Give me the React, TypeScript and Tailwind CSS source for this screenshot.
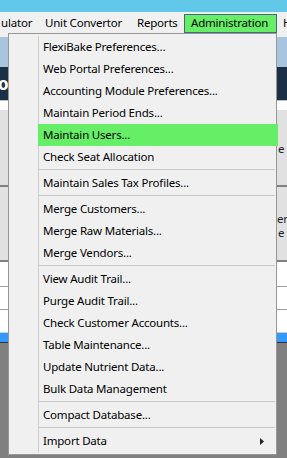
import React from "react";

type Entry = { label: string; active?: boolean; sub?: boolean } | "sep";

const entries: Entry[] = [
  { label: "FlexiBake Preferences..." },
  { label: "Web Portal Preferences..." },
  { label: "Accounting Module Preferences..." },
  { label: "Maintain Period Ends..." },
  { label: "Maintain Users...", active: true },
  { label: "Check Seat Allocation" },
  "sep",
  { label: "Maintain Sales Tax Profiles..." },
  "sep",
  { label: "Merge Customers..." },
  { label: "Merge Raw Materials..." },
  { label: "Merge Vendors..." },
  "sep",
  { label: "View Audit Trail..." },
  { label: "Purge Audit Trail..." },
  { label: "Check Customer Accounts..." },
  { label: "Table Maintenance..." },
  { label: "Update Nutrient Data..." },
  { label: "Bulk Data Management" },
  "sep",
  { label: "Compact Database..." },
  "sep",
  { label: "Import Data", sub: true },
];

const App: React.FC = () => {
  return (
    <div className="relative w-[287px] h-[458px] overflow-hidden bg-[#808080] font-['Noto_Sans',sans-serif] text-[11.5px] tracking-[-0.2px] text-black">
      {/* window background */}
      <div className="flex flex-col">
        <div className="h-[12px] bg-[#62c8ea]" />

        {/* menu bar */}
        <div className="h-[21px] bg-[#f0f0f0] flex items-center whitespace-nowrap">
          <div className="w-[38px] shrink-0 pl-[1px] overflow-hidden">ulator</div>
          <div className="w-[92px] shrink-0 pl-[7px]">Unit Convertor</div>
          <div className="w-[54px] shrink-0 pl-[7px]">Reports</div>
          <div className="w-[93px] shrink-0 h-[19px] mt-[1px] flex items-center pl-[6px] bg-[#66ee66] border border-[#44687c]">
            Administration
          </div>
          <div className="shrink-0 pl-[6px]">H</div>
        </div>

        <div className="h-[4px] bg-[#f0f0f0]" />
        <div className="h-[30px] bg-[#a9c4df]" />
        <div className="h-[33px] bg-[#1b2f47] flex items-center">
          <span className="-ml-[2px] text-white font-bold text-[17px]">o</span>
        </div>
        <div className="h-[10px] bg-white border-t border-[#c0c0c0]" />
        <div className="h-[75px] bg-[#e1e1e1] flex items-center whitespace-nowrap text-[#222]">
          <span className="pl-[278px] mt-[2px]">e S</span>
        </div>
        <div className="h-[2px] bg-[#808080]" />
        <div className="h-[73px] bg-[#e1e1e1] flex flex-col justify-center whitespace-nowrap leading-[14px] pt-[4px] text-[#222]">
          <span className="pl-[277px]">er</span>
          <span className="pl-[278px]">e</span>
        </div>
        <div className="h-[2px] bg-[#808080]" />
        <div className="h-[25px] bg-white border-b border-[#a0a0a0]" />
        <div className="h-[23px] bg-white border-b border-[#a0a0a0]" />
        <div className="h-[23px] bg-white border-b border-[#d0d0d0]" />
        <div className="h-[10px] bg-[#3399ff] border-b border-[#333]" />
      </div>

      {/* dropdown */}
      <div className="absolute left-[8px] top-[33px] w-[269px] bg-[#f0f0f0] border border-[#979797] pt-[2px] pb-[2px] flex">
        <div className="w-[29px] shrink-0" />
        <div className="flex-1 flex flex-col border-l border-[#cdcdcd]">
          {entries.map((e, i) =>
            e === "sep" ? (
              <div key={i} className="h-[4px] pt-[1px] pr-[1px]">
                <div className="h-[1px] bg-[#c9c9c9]" />
              </div>
            ) : (
              <div
                key={i}
                className={
                  e.active
                    ? "h-[22px] flex items-center -ml-[1px] -mr-[2px] pl-[5px] bg-[#66ee66] whitespace-nowrap"
                    : "h-[22px] flex items-center pl-[4px] pr-[12px] whitespace-nowrap"
                }
              >
                <span className="flex-1">{e.label}</span>
                {e.sub && (
                  <svg width="4" height="7" viewBox="0 0 4 7">
                    <path d="M0 0 L4 3.5 L0 7 Z" fill="#222" />
                  </svg>
                )}
              </div>
            )
          )}
        </div>
      </div>
    </div>
  );
};

export default App;
